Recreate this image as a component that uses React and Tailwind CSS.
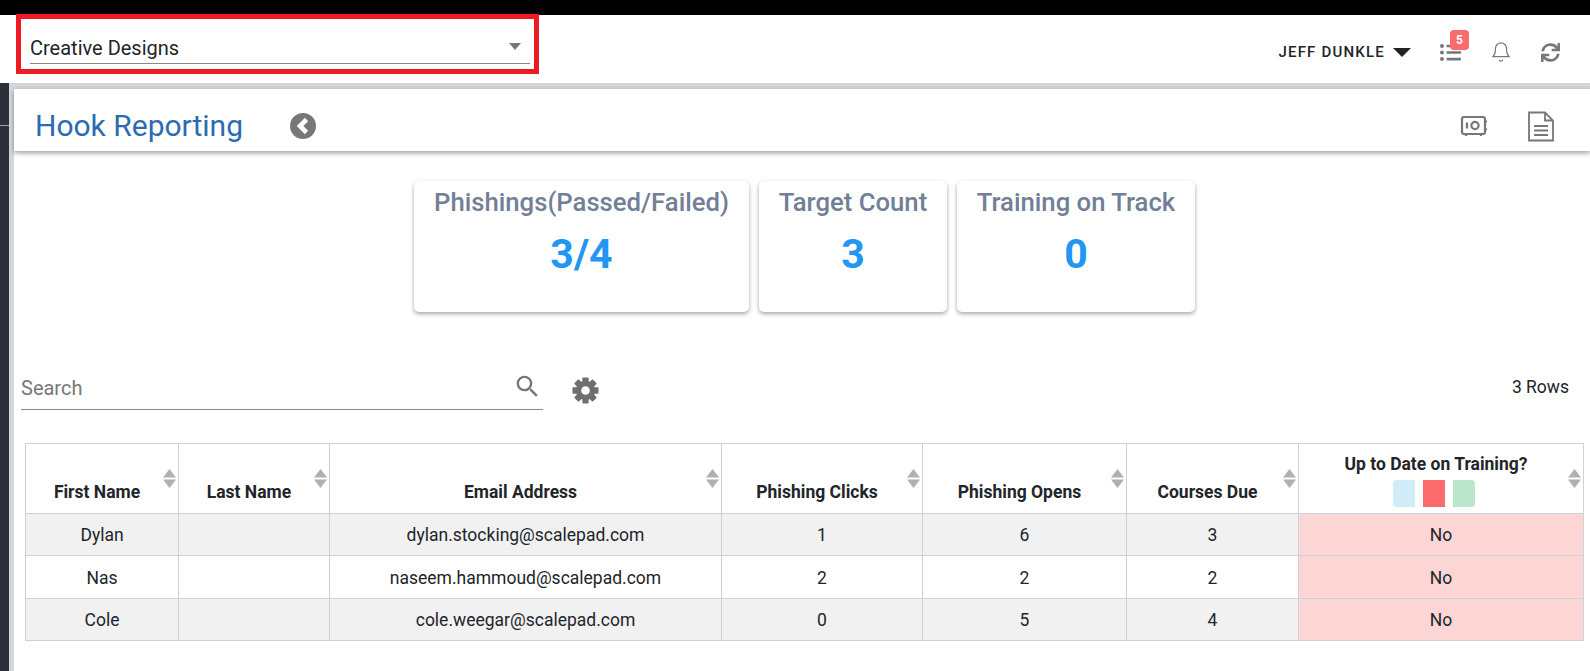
import React from 'react';
import { FaSync, FaListUl } from 'react-icons/fa';
import { FiBell } from 'react-icons/fi';
import { MdSearch } from 'react-icons/md';

const columns = [
    { label: 'First Name', width: 'w-[153px]' },
    { label: 'Last Name', width: 'w-[151px]' },
    { label: 'Email Address', width: 'w-[392px]' },
    { label: 'Phishing Clicks', width: 'w-[201px]' },
    { label: 'Phishing Opens', width: 'w-[204px]' },
    { label: 'Courses Due', width: 'w-[172px]' },
];

const rows = [
    { first: 'Dylan', email: 'dylan.stocking@scalepad.com', clicks: 1, opens: 6, due: 3, height: 'h-[42px]', bg: 'bg-[#f1f1f1]' },
    { first: 'Nas', email: 'naseem.hammoud@scalepad.com', clicks: 2, opens: 2, due: 2, height: 'h-[43px]', bg: 'bg-white' },
    { first: 'Cole', email: 'cole.weegar@scalepad.com', clicks: 0, opens: 5, due: 4, height: 'h-[42px]', bg: 'bg-[#f1f1f1]' },
];

const stats = [
    { title: 'Phishings(Passed/Failed)', value: '3/4', width: 'w-[335px]' },
    { title: 'Target Count', value: '3', width: 'w-[188px]' },
    { title: 'Training on Track', value: '0', width: 'w-[238px]' },
];

const SortArrows = () => (
    <svg className="absolute right-[2px] top-[25px]" width="13" height="19" viewBox="0 0 13 19" fill="#b0b0b0">
        <path d="M6.5 0 L13 8.5 H0 Z" />
        <path d="M0 10.5 H13 L6.5 19 Z" />
    </svg>
);

const SafeIcon = () => (
    <svg width="28" height="24" viewBox="0 0 28 24" fill="none" stroke="#777" strokeWidth="2.2">
        <rect x="2" y="3" width="23" height="17" rx="2" />
        <circle cx="15" cy="11.5" r="3.6" />
        <path d="M7 8.5v6M25 7.5h2M25 15.5h2M6 20v2M21 20v2" />
    </svg>
);

const DocIcon = () => (
    <svg width="28" height="31" viewBox="0 0 28 31" fill="none" stroke="#777" strokeWidth="1.8">
        <path d="M2 1.5h16l8 8v20H2z" />
        <path d="M18 1.5v8h8" />
        <path d="M7 15h14M7 19.5h14M7 24h14" strokeWidth="2" />
    </svg>
);

const BackIcon = () => (
    <svg className="ml-[47px]" width="26" height="26" viewBox="0 0 26 26">
        <circle cx="13" cy="13" r="13" fill="#777" />
        <path d="M16.5 6.5 L10 13 L16.5 19.5" fill="none" stroke="#fff" strokeWidth="4.6" />
    </svg>
);

const GearIcon = () => (
    <svg className="ml-[29px] mt-[14px]" width="27" height="27" viewBox="0 0 28 28" fill="#6f6f6f">
        {[0, 45, 90, 135].map((angle) => (
            <rect key={angle} x="10.75" y="0.5" width="6.5" height="27" rx="1" transform={`rotate(${angle} 14 14)`} />
        ))}
        <circle cx="14" cy="14" r="10" />
        <circle cx="14" cy="14" r="4.5" fill="#fff" />
    </svg>
);

const App = () => {
    return (
        <div className="h-[671px] w-[1590px] overflow-hidden bg-white text-[#212529] font-['Roboto',sans-serif]">
            <div className="h-[15px] bg-black" />

            {/* top bar */}
            <div className="flex h-[68px] items-start justify-between bg-white pl-4 pr-[30px]">
                <div className="-mt-px h-[60px] w-[523px] border-[5px] border-[#ed1c24] pl-[9px] pr-[4px] pt-[14px]">
                    <div className="flex h-[31px] items-center justify-between border-b border-[#8a8a8a] pr-[9px]">
                        <span className="text-[20px] leading-[24px]">Creative Designs</span>
                        <span className="mb-[4px] h-0 w-0 border-x-[6.5px] border-t-[7px] border-x-transparent border-t-[#777]" />
                    </div>
                </div>
                <div className="flex h-[64px] items-center pt-[10px]">
                    <span className="text-[15px] font-medium leading-none tracking-[1.2px]">JEFF DUNKLE</span>
                    <span className="ml-[8px] h-0 w-0 border-x-[9px] border-t-[9px] border-x-transparent border-t-[#222]" />
                    <div className="relative ml-[29px]">
                        <FaListUl className="text-[#777]" size={21} />
                        <span className="absolute -right-[8px] -top-[12px] flex h-[20px] w-[19px] items-center justify-center rounded-[4px] bg-[#fb6b6b] text-[12px] font-bold text-white">5</span>
                    </div>
                    <FiBell className="ml-[29px] text-[#777]" size={22} strokeWidth={1.4} />
                    <FaSync className="ml-[29px] text-[#777]" size={19} />
                </div>
            </div>

            <div className="flex h-[588px]">
                <div className="flex w-[9px] flex-col bg-[#2d3039]">
                    <div className="mt-[42px] h-px bg-[#9aa0a6]" />
                </div>
                <div className="w-[5px] bg-[#d3d6da]" />

                <div className="flex-1 bg-white">
                    <div className="-ml-[5px] h-[6px] bg-[#d3d6da]" />
                    {/* page heading */}
                    <div className="flex h-[62px] items-center justify-between rounded-tl-[4px] bg-white pl-[21px] pr-[35px] pt-[12px] shadow-[0_2px_5px_rgba(0,0,0,0.4)]">
                        <div className="flex items-center">
                            <h1 className="text-[30px] leading-[40px] text-[#2b6cb0]">Hook Reporting</h1>
                            <BackIcon />
                        </div>
                        <div className="flex items-center gap-[39px]">
                            <SafeIcon />
                            <DocIcon />
                        </div>
                    </div>

                    {/* stat cards */}
                    <div className="ml-[400px] mt-[30px] flex gap-[10px]">
                        {stats.map((stat) => (
                            <div key={stat.title} className={`${stat.width} h-[131px] rounded-[5px] bg-white text-center shadow-[0_2px_4px_rgba(0,0,0,0.35)]`}>
                                <div className="mt-[5px] text-[25.7px] font-medium leading-[32px] text-[#718096]">{stat.title}</div>
                                <div className="mt-[11px] text-[41px] font-bold leading-[50px] text-[#2196f3]">{stat.value}</div>
                            </div>
                        ))}
                    </div>

                    {/* search row */}
                    <div className="mt-[51px] flex items-start pl-[7px] pr-[21px]">
                        <div className="flex h-[47px] w-[522px] items-center justify-between border-b border-[#8a8a8a] pr-[1px]">
                            <span className="mt-[3px] text-[20px] text-[#777]">Search</span>
                            <MdSearch className="text-[#777]" size={29} />
                        </div>
                        <GearIcon />
                        <span className="ml-auto mt-[11px] text-[17.5px]">3 Rows</span>
                    </div>

                    {/* table */}
                    <div className="ml-[11px] mt-[33px]">
                        <table className="w-[1559px] table-fixed border-collapse text-center text-[17.5px]">
                            <thead>
                                <tr className="h-[70px]">
                                    {columns.map((col) => (
                                        <th key={col.label} className={`${col.width} relative border border-[#cbd2d9] pb-[8px] pl-1 pr-[14px] align-bottom text-[17.5px] font-bold`}>
                                            {col.label}
                                            <SortArrows />
                                        </th>
                                    ))}
                                    <th className="relative border border-[#cbd2d9] pr-[10px] pt-[9px] align-top text-[17.5px] font-bold leading-[22px]">
                                        Up to Date on Training?
                                        <div className="mr-[4px] mt-[5px] flex justify-center gap-2">
                                            <span className="h-[27px] w-[22px] rounded-l-[4px] bg-[#d1ecf7]" />
                                            <span className="h-[27px] w-[22px] bg-[#fb6b6b]" />
                                            <span className="h-[27px] w-[22px] rounded-r-[4px] bg-[#bce6cc]" />
                                        </div>
                                        <SortArrows />
                                    </th>
                                </tr>
                            </thead>
                            <tbody>
                                {rows.map((row) => (
                                    <tr key={row.email} className={`${row.height} ${row.bg}`}>
                                        <td className="border border-[#cbd2d9] pt-[2px]">{row.first}</td>
                                        <td className="border border-[#cbd2d9]"></td>
                                        <td className="border border-[#cbd2d9] pt-[2px]">{row.email}</td>
                                        <td className="border border-[#cbd2d9] pt-[2px]">{row.clicks}</td>
                                        <td className="border border-[#cbd2d9] pt-[2px]">{row.opens}</td>
                                        <td className="border border-[#cbd2d9] pt-[2px]">{row.due}</td>
                                        <td className="border border-[#cbd2d9] bg-[#fcd5d5] pt-[2px]">No</td>
                                    </tr>
                                ))}
                            </tbody>
                        </table>
                    </div>
                </div>
            </div>
        </div>
    );
};

export default App;
